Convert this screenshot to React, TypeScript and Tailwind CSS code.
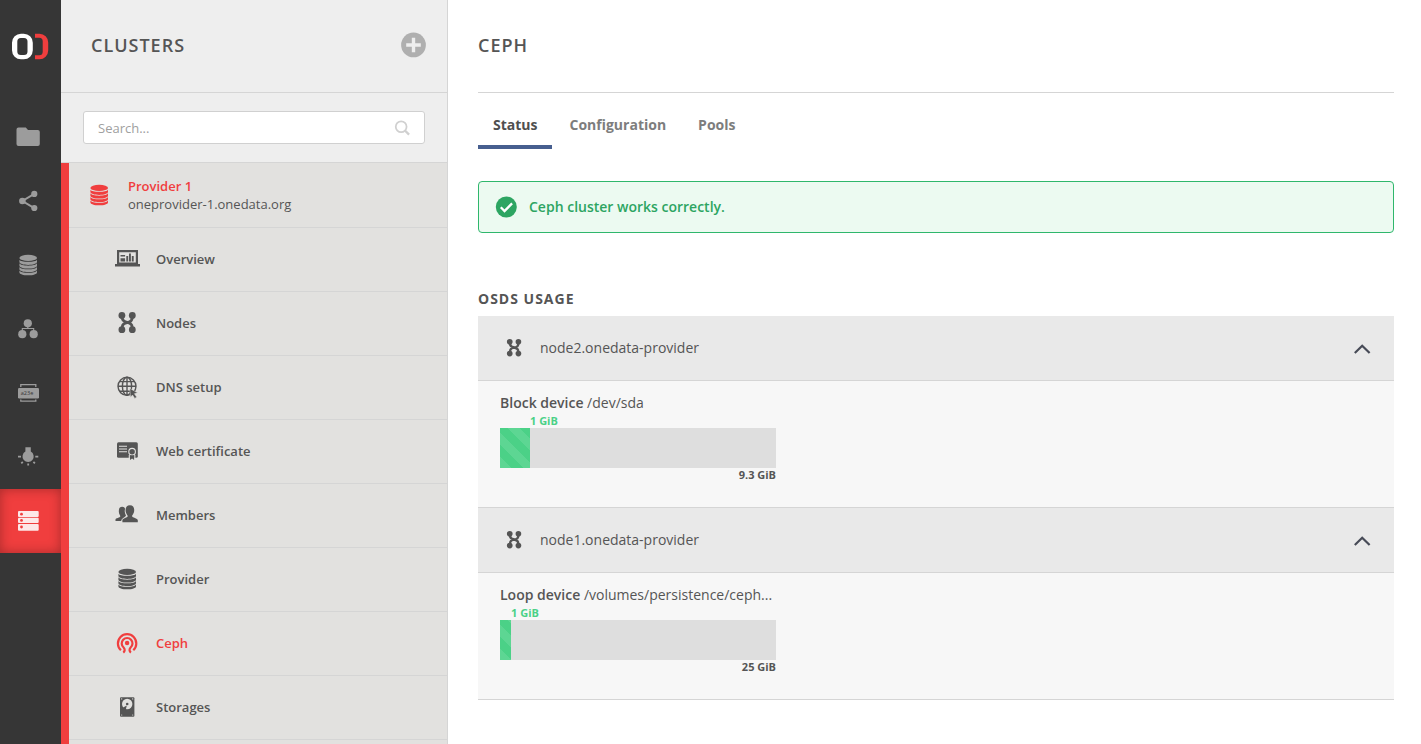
import { useState } from 'react';
import type { ReactNode } from 'react';

function Icon({ children, className = 'size-6' }: { children: ReactNode; className?: string }) {
  return (
    <svg viewBox="0 0 24 24" className={`${className} shrink-0`} fill="currentColor" aria-hidden="true">
      {children}
    </svg>
  );
}

function Logo() {
  return (
    <svg viewBox="0 0 38 28" className="h-7 w-[38px]" aria-hidden="true">
      <path
        d="M10 1.700h2.800a9 9 0 0 1 9 9v7.600a9 9 0 0 1-9 9H10a9 9 0 0 1-9-9v-7.600a9 9 0 0 1 9-9zm-.2 4.200a3.600 3.600 0 0 0-3.500 3.600v10a3.600 3.600 0 0 0 3.500 3.600H13a3.600 3.600 0 0 0 3.500-3.600v-10A3.600 3.600 0 0 0 13 5.900z"
        fill="#fff"
        fillRule="evenodd"
      />
      <path
        d="M24 1.700h4.500a8.700 8.700 0 0 1 8.700 8.700v8.200a8.700 8.700 0 0 1-8.700 8.700H24v-4h4.200a3.600 3.600 0 0 0 3.500-3.600V9.300a3.600 3.600 0 0 0-3.500-3.600H24z"
        fill="#f03e3e"
      />
    </svg>
  );
}

function DatabaseIcon({ className }: { className?: string }) {
  return (
    <Icon className={className}>
      <ellipse cx="12.2" cy="4.9" rx="8.8" ry="3.1" />
      <path d="M3.4 6.8c.8 1.4 4.400 2 8.800 2s8-.6 8.800-2v2.300c0 1.600-3.900 2.900-8.800 2.900s-8.800-1.300-8.800-2.900z" />
      <path d="M3.4 10.300c.8 1.500 4.400 2.400 8.800 2.400s8-.9 8.800-2.400v2.400c0 1.600-3.900 2.900-8.800 2.900s-8.800-1.300-8.800-2.900z" />
      <path d="M3.4 13.900c.8 1.500 4.400 2.400 8.800 2.400s8-.9 8.800-2.400v2.400c0 1.600-3.900 2.900-8.800 2.900s-8.800-1.300-8.800-2.900z" />
      <path d="M3.4 17.500c.8 1.500 4.400 2.400 8.800 2.400s8-.9 8.800-2.400v1.900c0 1.600-3.900 2.900-8.800 2.900s-8.800-1.300-8.800-2.900z" />
    </Icon>
  );
}

function NodesIcon({ className }: { className?: string }) {
  return (
    <Icon className={className}>
      <circle cx="6.900" cy="4.500" r="3.400" />
      <circle cx="17.300" cy="4.500" r="3.400" />
      <circle cx="6.900" cy="18.700" r="3.400" />
      <circle cx="17.300" cy="18.700" r="3.400" />
      <path
        d="M7.300 4.500v2.600c0 2.600 1.600 3.600 4.900 4.300s4.900 2 4.900 4.600v2.700M17.100 4.500v2.600c0 2.900-1.500 4-4.900 4.500s-4.900 1.800-4.900 4.400v2.700"
        fill="none"
        stroke="currentColor"
        strokeWidth="2.800"
      />
    </Icon>
  );
}

const railItems = [
  {
    label: 'Data',
    icon: (
      <Icon>
        <path d="M.5 4.500a2 2 0 0 1 2-2h7.300l2.200 2.600h9.800a2 2 0 0 1 2 2V19a2 2 0 0 1-2 2H2.500a2 2 0 0 1-2-2z" />
      </Icon>
    ),
  },
  {
    label: 'Shares',
    icon: (
      <Icon>
        <circle cx="6.400" cy="12" r="3.300" />
        <circle cx="18.300" cy="4.900" r="3.100" />
        <circle cx="18.300" cy="19" r="3.100" />
        <path d="M18.300 4.900 6.400 12l11.900 7.100" fill="none" stroke="currentColor" strokeWidth="2" />
      </Icon>
    ),
  },
  { label: 'Providers', icon: <DatabaseIcon /> },
  {
    label: 'Groups',
    icon: (
      <Icon>
        <circle cx="11.800" cy="6.300" r="4.100" />
        <circle cx="6.300" cy="17.200" r="4.100" />
        <circle cx="17.700" cy="17.200" r="4.100" />
        <path d="M11.800 9v2.500M6.300 14v-2.500h11.400V14" fill="none" stroke="currentColor" strokeWidth="1.100" />
      </Icon>
    ),
  },
  {
    label: 'Tokens',
    icon: (
      <Icon>
        <rect x="2" y="7" width="21" height="10.500" rx="1.200" />
        <path d="M4.800 6V3.700h15V6M4.800 18.400v1.700h15v-1.700" fill="none" stroke="currentColor" strokeWidth="1.300" />
        <text x="4.800" y="14" fontSize="5.500" fontFamily="Open Sans, sans-serif" fill="#363636">
          a23e
        </text>
      </Icon>
    ),
  },
  {
    label: 'Discovery',
    icon: (
      <Icon>
        <path d="M9.400 2.200h5.400v4.400a5.600 5.600 0 1 1-5.400 0z" />
        <path
          d="M2 11.600h3M19.300 11.600h3M5.300 18.300l1.500-1.500M18.900 18.300l-1.500-1.500M12.200 18.600v2"
          fill="none"
          stroke="currentColor"
          strokeWidth="1.800"
        />
      </Icon>
    ),
  },
  {
    label: 'Clusters',
    icon: (
      <Icon className="size-6 text-[#fde8e8]">
        <rect x="2" y="2" width="20.700" height="5.900" rx="1" />
        <rect x="2" y="8.800" width="20.700" height="5.200" rx="1" />
        <rect x="2" y="15" width="20.700" height="6.800" rx="1" />
        <g fill="#f03e3e">
          <circle cx="5.500" cy="5.200" r="1.400" />
          <circle cx="5.500" cy="11.400" r="1.400" />
          <circle cx="5.500" cy="18" r="1.400" />
        </g>
      </Icon>
    ),
  },
];

const menuItems = [
  {
    label: 'Overview',
    icon: (
      <Icon className="size-6 overflow-visible">
        <path d="M2 3h21v14H2zm2.200 2.200v10.200h16.600V5.200z" fillRule="evenodd" />
        <path d="M0 16.900h25v2.600H0zM5.500 8h4.600v1.600H5.500zM5.500 11.300h4.600v3.200H5.500zM11.300 9h1.900v5.500h-1.900zM14 6.600h1.900v7.900H14zM16.800 9h1.900v5.500h-1.900z" />
      </Icon>
    ),
  },
  { label: 'Nodes', icon: <NodesIcon /> },
  {
    label: 'DNS setup',
    icon: (
      <Icon>
        <g fill="none" stroke="currentColor" strokeWidth="1.400">
          <circle cx="12" cy="11.300" r="9" />
          <ellipse cx="12" cy="11.300" rx="4.600" ry="9" />
          <path d="M12 2.300v18M3 11.300h18M4.500 6.600h15M4.500 16.200h13" />
        </g>
        <path
          d="m14.800 13.400 7.800 4.400-3.200.9 2.300 3.400-1.900 1.300-2.300-3.400-2 2.300z"
          stroke="#e2e1df"
          strokeWidth=".5"
        />
      </Icon>
    ),
  },
  {
    label: 'Web certificate',
    icon: (
      <Icon>
        <rect x="2" y="3.200" width="20.800" height="15.600" rx="1.500" />
        <g stroke="#e2e1df" fill="none" strokeWidth="1.100">
          <path d="M4 7.200h8M4 10h8M4 12.800h8" />
          <path d="M14.300 20v-4M19.800 20v-4" />
          <circle cx="17.100" cy="12.700" r="3.300" />
        </g>
        <path d="M15 16.600h4.100V21l-2-1.500L15 21z" />
      </Icon>
    ),
  },
  {
    label: 'Members',
    icon: (
      <Icon>
        <path d="M.5 18v-1.400c0-1.500 4.800-1.800 4.800-3.300 0-1-1.500-1.800-1.500-5 0-2.700 1-4.500 3.400-4.500 1.600 0 2.500.7 2.900 2-1 3 .2 5.100.8 6.500.5 1.600-4.700 2.800-4.700 5.700z" />
        <path d="M7.400 19.200v-2c0-2.200 5.300-2.300 5.300-4.200 0-1.200-2.100-2.200-2.100-5.800 0-3.100 1.400-4.900 4.300-4.900s4.300 1.800 4.300 4.900c0 3.600-2.100 4.600-2.100 5.800 0 1.900 5.700 2 5.700 4.200v2z" />
      </Icon>
    ),
  },
  { label: 'Provider', icon: <DatabaseIcon /> },
  {
    label: 'Ceph',
    icon: (
      <Icon>
        <circle cx="12.100" cy="12" r="2.200" />
        <g fill="none" stroke="currentColor" strokeWidth="2.200">
          <path d="M5.900 19.200a9.200 9.200 0 1 1 12.400 0" />
          <path d="M8.300 21.600c1.700-1.300 1.900-3.400.3-5.100a5.400 5.400 0 1 1 7 0c-1.600 1.700-1.400 3.800.3 5.100" />
        </g>
      </Icon>
    ),
  },
  {
    label: 'Storages',
    icon: (
      <Icon>
        <path d="M6 2.200h12.400a1 1 0 0 1 1 1v17.600a1 1 0 0 1-1 1H6a1 1 0 0 1-1-1V3.200a1 1 0 0 1 1-1z" />
        <circle cx="12.200" cy="9" r="5.200" fill="#e2e1df" />
        <circle cx="12.200" cy="9" r="1.300" />
        <path d="m11.800 10.600-1.100 4.700-4 .5 1-3z" />
        <g fill="#e2e1df">
          <circle cx="6.700" cy="3.900" r=".6" />
          <circle cx="17.700" cy="3.900" r=".6" />
          <circle cx="6.700" cy="20" r=".6" />
          <circle cx="17.700" cy="20" r=".6" />
        </g>
      </Icon>
    ),
  },
];

const nodes = [
  { host: 'node2.onedata-provider', type: 'Block device', path: '/dev/sda', used: '1 GiB', total: '9.3 GiB', percent: 10.87 },
  {
    host: 'node1.onedata-provider',
    type: 'Loop device',
    path: '/volumes/persistence/ceph...',
    used: '1 GiB',
    total: '25 GiB',
    percent: 4,
  },
];

function NodePanel({ node }: { node: (typeof nodes)[number] }) {
  const [open, setOpen] = useState(true);
  return (
    <li>
      <button
        type="button"
        aria-expanded={open}
        onClick={() => setOpen(!open)}
        className="flex w-full items-center border-b border-[#d5d5d5] bg-[#e9e9e9] py-5 pr-5 pl-[26px] text-left text-sm leading-6"
      >
        <NodesIcon className="size-5" />
        <span className="ml-4 flex-1">{node.host}</span>
        <Icon className={open ? 'size-6 text-[#474b57]' : 'size-6 rotate-180 text-[#474b57]'}>
          <path d="m4.800 17 7.400-7.300 7.400 7.300" fill="none" stroke="currentColor" strokeWidth="2.200" />
        </Icon>
      </button>
      {open && (
        <div className="border-b border-[#d5d5d5] bg-[#f7f7f7] px-[22px] pt-3 pb-[25px]">
          <div className="w-[276px]">
            <p className="text-sm leading-5 whitespace-nowrap">
              <span className="font-semibold">{node.type}</span> {node.path}
            </p>
            <p className="text-[11px] leading-[15px] font-bold text-[#4bd187]" style={{ paddingLeft: `${node.percent}%` }}>
              {node.used}
            </p>
            <div className="h-10 bg-[#dedede]">
              <div
                className="h-full bg-[#4bd187] bg-[linear-gradient(45deg,rgba(255,255,255,0.1)_25%,transparent_25%,transparent_50%,rgba(255,255,255,0.1)_50%,rgba(255,255,255,0.1)_75%,transparent_75%)] bg-[length:24px_24px] bg-bottom-left"
                style={{ width: `${node.percent}%` }}
              />
            </div>
            <p className="text-right text-[11px] leading-[14px] font-bold">{node.total}</p>
          </div>
        </div>
      )}
    </li>
  );
}

export default function App() {
  return (
    <div className="flex h-screen overflow-hidden bg-white font-['Open_Sans',sans-serif] text-[#555]">
      <nav aria-label="Main" className="w-[61px] shrink-0 bg-[#363636] text-[#9c9c9c]">
        <a href="#home" aria-label="Home" className="flex h-[105px] items-start pt-8 pl-[11px]">
          <Logo />
        </a>
        <ul>
          {railItems.map((item) => (
            <li key={item.label}>
              <a
                href={`#${item.label}`}
                aria-label={item.label}
                className={
                  item.label === 'Clusters'
                    ? 'flex h-16 items-center bg-[#f03e3e] pl-4 shadow-[inset_0_0_12px_rgba(0,0,0,0.3)]'
                    : 'flex h-16 items-center pl-4'
                }
              >
                {item.icon}
              </a>
            </li>
          ))}
        </ul>
      </nav>

      <aside className="flex w-[387px] shrink-0 flex-col border-r border-[#d5d5d5] bg-[#eee]">
        <header className="flex h-[93px] shrink-0 items-center justify-between border-b border-[#d5d5d5] pr-5 pb-[2px] pl-[30px]">
          <h1 className="text-lg leading-6 font-semibold tracking-[1px]">CLUSTERS</h1>
          <button type="button" aria-label="Add cluster" className="text-[#afafaf]">
            <Icon className="size-[27px]">
              <circle cx="12" cy="11.500" r="11" />
              <path d="M12 5v13M5.500 11.500h13" stroke="#eee" strokeWidth="3" />
            </Icon>
          </button>
        </header>
        <div className="shrink-0 border-b border-[#d5d5d5] px-[22px] py-[18px]">
          <label className="flex h-[33px] items-center rounded-[3px] border border-[#d0d0d0] bg-white pr-3 pl-[14px]">
            <input
              type="text"
              aria-label="Search clusters"
              placeholder="Search..."
              className="min-w-0 flex-1 bg-transparent pt-[2px] text-[13px] outline-none placeholder:text-[#a0a0a0]"
            />
            <Icon className="size-5 text-[#d0d0d0]">
              <circle cx="11" cy="10.500" r="6.500" fill="none" stroke="currentColor" strokeWidth="2.100" />
              <path d="m15.500 15 5 5" stroke="currentColor" strokeWidth="2.800" />
            </Icon>
          </label>
        </div>
        <div className="min-h-0 flex-1 overflow-hidden border-l-8 border-[#f03e3e] bg-[#e2e1df] text-[13px]">
          <a href="#provider-1" className="flex h-[65px] items-center border-b border-[#d5d5d5] pb-px pl-[18px]">
            <span className="text-[#f03e3e]">
              <DatabaseIcon />
            </span>
            <span className="ml-[17px] leading-[18px]">
              <span className="block font-semibold text-[#f03e3e]">Provider 1</span>
              <span className="block">oneprovider-1.onedata.org</span>
            </span>
          </a>
          <ul>
            {menuItems.map((item) => (
              <li key={item.label}>
                <a
                  href={`#${item.label}`}
                  className={
                    item.label === 'Ceph'
                      ? 'flex h-16 items-center border-b border-[#d5d5d5] pb-px pl-[46px] font-semibold text-[#f03e3e]'
                      : 'flex h-16 items-center border-b border-[#d5d5d5] pb-px pl-[46px] font-semibold'
                  }
                >
                  {item.icon}
                  <span className="ml-[17px] leading-5">{item.label}</span>
                </a>
              </li>
            ))}
          </ul>
        </div>
      </aside>

      <main className="min-w-0 flex-1 overflow-hidden pr-[27px] pl-[30px]">
        <header className="flex h-[93px] items-center border-b border-[#d5d5d5] pb-[2px]">
          <h2 className="text-lg leading-6 font-semibold tracking-[1px]">CEPH</h2>
        </header>
        <div className="flex h-14 gap-[2px] text-sm font-bold text-[#7d7d7d]">
          <button type="button" className="border-b-4 border-[#475f8f] px-[15px] pt-3 text-[#4f4f4f]">
            Status
          </button>
          <button type="button" className="border-b-4 border-transparent px-[15px] pt-3">
            Configuration
          </button>
          <button type="button" className="border-b-4 border-transparent px-[15px] pt-3">
            Pools
          </button>
        </div>
        <div
          role="status"
          className="mt-8 flex h-[52px] items-center rounded border border-[#2fb76c] bg-[#ecfaf1] px-4 text-sm font-semibold text-[#2da562]"
        >
          <Icon>
            <circle cx="11.300" cy="12" r="10.500" />
            <path d="m5.800 12.300 3.700 3.700 7.600-7.600" fill="none" stroke="#fff" strokeWidth="2.300" />
          </Icon>
          <span className="ml-[10px]">Ceph cluster works correctly.</span>
        </div>
        <section aria-labelledby="osds" className="mt-14">
          <h3 id="osds" className="pb-[7px] text-sm leading-5 font-bold tracking-[1px]">
            OSDS USAGE
          </h3>
          <ul>
            {nodes.map((node) => (
              <NodePanel key={node.host} node={node} />
            ))}
          </ul>
        </section>
      </main>
    </div>
  );
}
